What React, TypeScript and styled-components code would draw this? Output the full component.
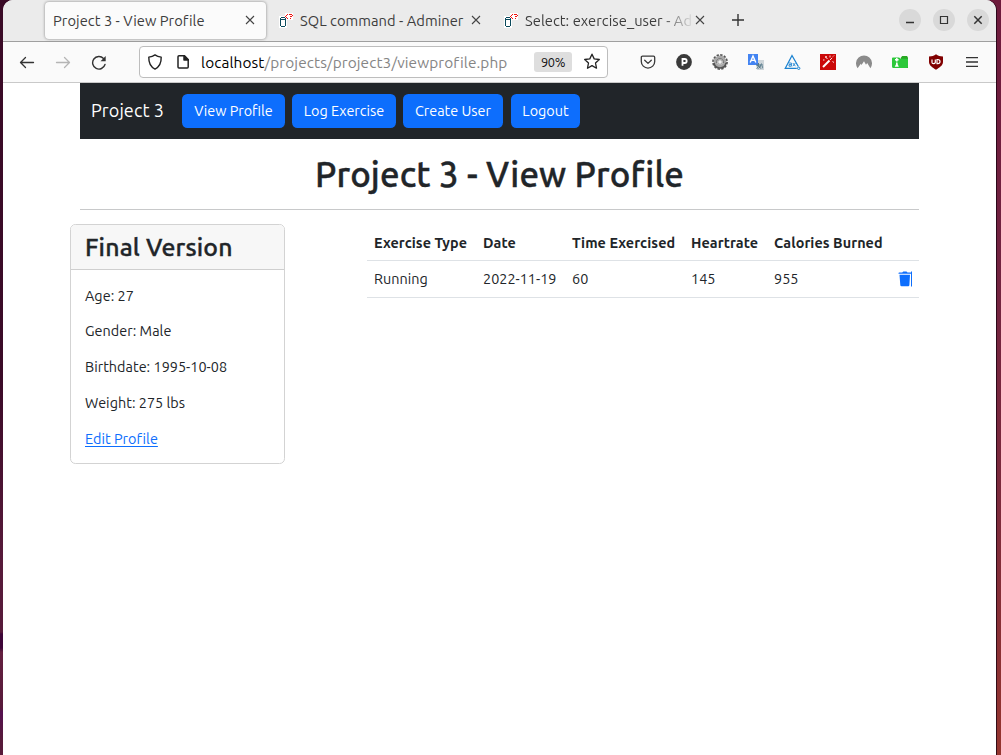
import React from "react";
import styled, { createGlobalStyle } from "styled-components";

const GlobalStyle = createGlobalStyle`
  * { box-sizing: border-box; }
  html, body { margin: 0; height: 755px; overflow: hidden; }
  body { font-family: Ubuntu, "Noto Sans", "Open Sans", sans-serif; font-size: 14.4px; color: #212529; }
`;

const Desktop = styled.div`
  height: 755px;
  padding: 0 5px 0 3px;
  background:
    linear-gradient(#3a0a26 0, #3b0a28 380px, #571a3a 560px, #571a3a 632px, #3e0638 634px, #3e0638 648px, #642040 652px, #571a3a 708px, #551050 712px, #571a3a 740px) left / 500px 100% no-repeat,
    linear-gradient(#6e1a3c 0, #712240 250px, #7c2a3c 500px, #95352f 755px);
`;

const Window = styled.div`
  display: flex;
  flex-direction: column;
  height: 755px;
  background: #fff;
  border-radius: 10px 10px 0 0;
  overflow: hidden;
  box-shadow: 1px 0 0 rgba(20, 0, 15, 0.75);
`;

const TabStrip = styled.div`
  display: flex;
  align-items: center;
  height: 42px;
  flex: none;
  padding: 0 7px 1px 42px;
  background: #ebebeb;
  border-bottom: 1px solid #9f9f9f;
`;

const Tab = styled.div<{ $active?: boolean; $width: number }>`
  display: flex;
  align-items: center;
  width: ${(p) => p.$width}px;
  height: 37px;
  padding: 0 ${(p) => (p.$active ? 11 : 10)}px 0 ${(p) => (p.$active ? 8 : 12)}px;
  border-radius: 4px;
  color: #3d3d3d;
  background: ${(p) => (p.$active ? "#fbfbfb" : "transparent")};
  box-shadow: ${(p) => (p.$active ? "0 0 3px rgba(0,0,0,.45)" : "none")};
`;

const TabTitle = styled.span<{ $fade?: boolean }>`
  flex: 1;
  min-width: 0;
  padding-top: 1px;
  white-space: nowrap;
  font-size: 14.7px;
  line-height: 22px;
  letter-spacing: 0.04px;
  ${(p) => p.$fade && "mask-image: linear-gradient(to right, #000 calc(100% - 34px), transparent);"}
`;

const NewTab = styled.div`
  display: flex;
  flex: 1;
  padding-left: 16px;
`;

const WindowButton = styled.div`
  display: flex;
  width: 22px;
  height: 22px;
  margin-left: 12px;
  border-radius: 50%;
  background: #d9d9d9;
`;

const Toolbar = styled.div`
  display: flex;
  align-items: center;
  flex: none;
  height: 41px;
  padding: 0 16px 1px;
  background: #fafafa;
  border-bottom: 1px solid #c9c9c9;
  color: #3a3a3a;
`;

const NavIcons = styled.div`
  display: flex;
  gap: 20px;
  width: 120px;
`;

const UrlBar = styled.div`
  display: flex;
  align-items: center;
  width: 469px;
  height: 32px;
  padding: 0 7px;
  border: 1px solid #bdbdbd;
  border-radius: 4px;
  background: #fff;
  color: #222;
`;

const UrlText = styled.div`
  flex: 1;
  margin-left: 11px;
  padding-top: 1px;
  white-space: nowrap;
  font-size: 15.4px;
  letter-spacing: 0.1px;
  color: #858585;
  b { font-weight: 400; color: #000; }
`;

const ZoomBadge = styled.span`
  width: 38px;
  height: 20px;
  margin-right: 11px;
  border-radius: 3px;
  background: #dedede;
  color: #111;
  font-size: 12.8px;
  line-height: 21px;
  text-align: center;
  letter-spacing: -0.4px;
`;

const Extensions = styled.div`
  display: grid;
  grid-template-columns: repeat(10, 16px);
  gap: 20px;
  margin-left: 32px;
`;

const Page = styled.main`
  width: 839px;
  margin-left: 77px;
`;

const Navbar = styled.nav`
  display: flex;
  align-items: center;
  height: 56px;
  padding-left: 11px;
  background: #212529;
`;

const Brand = styled.span`
  width: 91px;
  padding-bottom: 2px;
  color: #fff;
  font-size: 18px;
  letter-spacing: 0.1px;
  white-space: nowrap;
`;

const NavButton = styled.button<{ $width: number; $gap: number }>`
  width: ${(p) => p.$width}px;
  height: 34px;
  margin: 0 ${(p) => p.$gap}px 0 0;
  padding: 0;
  border: 0;
  border-radius: 5.4px;
  background: #0d6efd;
  color: #fff;
  font: 14.4px/34px Ubuntu, "Noto Sans", "Open Sans", sans-serif;
  white-space: nowrap;
`;

const PageTitle = styled.h1`
  height: 71px;
  margin: 0 0 14px;
  padding-top: 14px;
  border-bottom: 1px solid #c8c9ca;
  font-size: 34.8px;
  line-height: 43px;
  font-weight: 500;
  letter-spacing: 0.13px;
  -webkit-text-stroke: 0.4px #212529;
  text-align: center;
  white-space: nowrap;
`;

const Columns = styled.div`
  display: flex;
  align-items: flex-start;
  margin-left: -10px;
  gap: 82px;
`;

const Card = styled.section`
  width: 215px;
  height: 240px;
  border: 1px solid #d3d3d3;
  border-radius: 5.4px;
  overflow: hidden;
`;

const CardTitle = styled.h2`
  height: 45px;
  margin: 0;
  padding-left: 14px;
  border-bottom: 1px solid #cfcfcf;
  background: #f7f7f7;
  font-size: 24.8px;
  line-height: 44px;
  font-weight: 500;
  letter-spacing: 0.16px;
  -webkit-text-stroke: 0.35px #212529;
  white-space: nowrap;
`;

const CardBody = styled.div`
  display: flex;
  flex-direction: column;
  align-items: flex-start;
  gap: 14.1px;
  padding: 15.8px 14px;
`;

const Field = styled.span`
  line-height: 21.6px;
  letter-spacing: 0.03px;
  white-space: nowrap;
`;

const EditLink = styled(Field)`
  color: #0d6efd;
  text-decoration: underline;
  text-underline-offset: 2px;
`;

const Table = styled.div`
  width: 552px;
`;

const Row = styled.div<{ $head?: boolean }>`
  display: grid;
  grid-template-columns: 109px 89px 119px 83px 124px 1fr;
  align-items: center;
  height: 37px;
  padding: ${(p) => (p.$head ? "1px" : "0")} 0 0 7px;
  border-bottom: 1px solid #dee2e6;
  font-weight: ${(p) => (p.$head ? 700 : 400)};
  letter-spacing: ${(p) => (p.$head ? 0.06 : 0.02)}px;
`;

const Cell = styled.span`
  display: flex;
  white-space: nowrap;
`;

const Close = () => (
  <svg width="10" height="10" viewBox="0 0 10 10" stroke="#444" strokeWidth="1.1">
    <path d="M1 1l8 8M9 1l-8 8" />
  </svg>
);

const Plus = () => (
  <svg width="14" height="14" viewBox="0 0 14 14" stroke="#333" strokeWidth="1.4">
    <path d="M7 1v12M1 7h12" />
  </svg>
);

const FaviconSvg = styled.svg`
  flex: none;
  margin-right: 5px;
`;

const AdminerIcon = () => (
  <FaviconSvg width="17" height="17" viewBox="0 0 17 17" shapeRendering="crispEdges">
    <path d="M1 4h8v12H1zM7 1h8v7H7z" fill="#fff" />
    <path d="M3 5h4v1H3zM2 6h1v8H2zM7 6h1v8H7zM3 7h4v1H3zM3 14h4v1H3z" fill="#0b4a5c" />
    <path d="M9 2h1v1H9zM8 3h1v1H8zM7 4h1v1H7zM8 5h1v1H8zM9 6h1v1H9zM11 2h3v1h-3zM14 3h1v1h-1zM12 4h2v1h-2zM12 6h1v1h-1z" fill="#f01010" />
  </FaviconSvg>
);

const Arrow = ({ color = "#333", flip = false }: { color?: string; flip?: boolean }) => (
  <svg width="16" height="16" viewBox="0 0 16 16" fill="none" stroke={color} strokeWidth="1.3" strokeLinecap="round" strokeLinejoin="round">
    <path d={flip ? "M1.5 8.500h13M9.5 3.500L14.500 8.500l-5 5" : "M14.5 8.500h-13M6.5 3.500L1.500 8.500l5 5"} />
  </svg>
);

const Reload = () => (
  <svg width="16" height="16" viewBox="0 0 16 16" fill="none" stroke="#333" strokeWidth="1.4" strokeLinecap="round">
    <path d="M14 10.500A6.300 6.300 0 1 1 12.500 4.400" />
    <path d="M14.700 2v5.200H9.500z" fill="#333" stroke="none" />
  </svg>
);

const Shield = () => (
  <svg width="16" height="16" viewBox="0 0 16 16" fill="none" stroke="#222" strokeWidth="1.4" strokeLinejoin="round">
    <path d="M8 .9c2 1.5 4 2 6.200 2.200.2 5.800-1.600 9.800-6.200 12C3.400 12.900 1.600 8.900 1.800 3.100 4 2.900 6 2.400 8 .9z" />
  </svg>
);

const PageSvg = styled.svg`
  margin-left: 13px;
`;

const PageIcon = () => (
  <PageSvg width="14" height="16" viewBox="0 0 14 16" fill="none" stroke="#222" strokeWidth="1.5" strokeLinejoin="round">
    <path d="M3 1.800h5.500l3.700 3.700v7.500q0 1-1 1H3q-1 0-1-1v-10.200q0-1 1-1z" />
    <path d="M8 1.800v4.200h4.200z" fill="#222" />
  </PageSvg>
);

const Star = () => (
  <svg width="17" height="17" viewBox="0 0 17 17" fill="none" stroke="#222" strokeWidth="1.3" strokeLinejoin="round">
    <path d="M9 1.200l2.200 4.700 5.100.6-3.800 3.500 1 5.200-4.500-2.600L4.500 15.200l1-5.200L1.700 6.500l5.100-.6z" />
  </svg>
);

const Pocket = () => (
  <svg width="16" height="16" viewBox="0 0 16 16" fill="none" stroke="#3a3a3a" strokeWidth="1.3" strokeLinecap="round" strokeLinejoin="round">
    <path d="M2.500 2.200h11q1.200 0 1.200 1.200v4a6.700 6.700 0 0 1-13.400 0v-4q0-1.200 1.200-1.200z" />
    <path d="M4.700 6.200L8 9.400l3.300-3.200" />
  </svg>
);

const BadgeP = () => (
  <svg width="16" height="16" viewBox="0 0 16 16">
    <circle cx="8" cy="8" r="7.900" fill="#3a3a3a" />
    <path d="M6.500 11.700V5H8.700a1.900 1.900 0 0 1 0 4H6.500" fill="none" stroke="#fff" strokeWidth="1.800" />
  </svg>
);

const Gear = () => (
  <svg width="16" height="16" viewBox="0 0 16 16" fill="none">
    <circle cx="8" cy="8" r="6.900" stroke="#555" strokeWidth="2" strokeDasharray="2.300 1.313" />
    <circle cx="8" cy="8" r="4.600" stroke="#a8a8a8" strokeWidth="3.600" />
    <path d="M2 9a6.100 6.100 0 0 0 12 0" stroke="#555" strokeWidth="1.500" />
    <path d="M4.500 9a3.600 3.600 0 1 1 7 0" stroke="#777" />
    <circle cx="8" cy="8" r="2.300" fill="#f2f2f2" stroke="#8a8a8a" strokeWidth=".8" />
  </svg>
);

const Translate = () => (
  <svg width="16" height="16" viewBox="0 0 16 16" fill="none">
    <path d="M7 6h9v10H9z" fill="#cfd6da" />
    <path d="M0 0h10v11H0z" fill="#4384f2" />
    <path d="M2.200 8.500L5 2l2.800 6.500M3.300 6.400h3.400" stroke="#fff" strokeWidth="1.400" />
    <path d="M8 11h7M10.500 9v2.500q0 2.500-2 3M9 11.500q3 0 3.500 3M13.500 9.500q-1 4-3 5M14 12q1 1 0 2.500" stroke="#55798a" strokeWidth="1" />
  </svg>
);

const Axe = () => (
  <svg width="17" height="16" viewBox="0 0 17 16" fill="none" stroke="#1c83d1" strokeWidth="1.300">
    <path d="M12.800 14.300H1.300L8 1.500l6.300 11" />
    <circle cx="14.700" cy="14.300" r="1.200" strokeWidth="1" />
    <path d="M4.800 9h2.600v3.200H5v-1.600h2.400M8.800 9l2.600 3.200M11.400 9l-2.600 3.200" strokeWidth=".9" />
  </svg>
);

const Wand = () => (
  <svg width="16" height="16" viewBox="0 0 16 16" fill="none">
    <path d="M0 0h16v16H0z" fill="#cb0909" />
    <path d="M3 13l6.500-6.500" stroke="#fff" strokeWidth="2" />
    <path d="M10 6l2.200-2.200M6 2v2M5 3h2M10 1.500v2M13 2.500l1-1M12.500 7.500l1.500 1M3 6h1.500M7.500 5l-1-1" stroke="#ffe2e2" strokeWidth="1" />
  </svg>
);

const Vpn = () => (
  <svg width="16" height="16" viewBox="0 0 16 16">
    <path d="M1.600 14.200A8 8 0 1 1 14.400 14.200L11.200 9l-1.200 1.800L8 7.300 5.500 11 4.800 9.700z" fill="#8b8b8b" />
  </svg>
);

const Folder = () => (
  <svg width="16" height="16" viewBox="0 0 16 16" fill="none">
    <path d="M9 3.500l1.200-1.500h4.800l1 1.500V14H9z" fill="#28a823" />
    <path d="M0 4.500Q0 3.500 1 3.500h6l2 1.200h7v8.300l-1 1H1.500q-1.500 0-1.500-1.500z" fill="#2cc83a" />
    <path d="M4.800 4v3.600M3 5.800h3.600M4.800 8.500v2" stroke="#fff" strokeWidth="1.500" />
    <path d="M4.800 8.800l2.100 4H2.700z" fill="#fff" />
  </svg>
);

const Ublock = () => (
  <svg width="16" height="16" viewBox="0 0 16 16" fill="none">
    <path d="M8 .3c2 1.500 4 2.200 7 2.200V8c0 3.500-3.500 5.500-7 7.700C4.500 13.500 1 11.500 1 8V2.500C4 2.500 6 1.800 8 .3z" fill="#800000" />
    <path d="M4 5.500v3q0 1.200 1.500 1.200T7.300 8.500v-3M9 5.500h.8q2.200 0 2.200 2.100T9.800 9.700H9z" stroke="#fff" strokeWidth="1.200" />
  </svg>
);

const Menu = () => (
  <svg width="16" height="16" viewBox="0 0 16 16" stroke="#333" strokeWidth="1.300">
    <path d="M2 3.600h12M2 8h12M2 12.400h12" />
  </svg>
);

const WindowGlyph = ({ d, width = 1.5 }: { d: string; width?: number }) => (
  <svg width="22" height="22" viewBox="0 0 22 22" fill="none" stroke="#333" strokeWidth={width}>
    <path d={d} />
  </svg>
);

const Trash = () => (
  <svg width="15" height="16" viewBox="0 0 15 16" fill="#0d6efd">
    <path d="M.5 2.300q0-.8.800-.8h2.900L5.300.6h3.200l1 .9H13v1.300H.5zM1.500 3.800h10.500l-.6 10.200q-.1 1.200-1.200 1.200H3.500q-1.100 0-1.200-1.200zM13 .5h1v15h-1z" />
  </svg>
);

export default function App() {
  return (
    <Desktop>
      <GlobalStyle />
      <Window>
        <TabStrip>
          <Tab $active $width={221}>
            <TabTitle>Project 3 - View Profile</TabTitle>
            <Close />
          </Tab>
          <Tab $width={225}>
            <AdminerIcon />
            <TabTitle>SQL command - Adminer</TabTitle>
            <Close />
          </Tab>
          <Tab $width={224}>
            <AdminerIcon />
            <TabTitle $fade>Select: exercise_user - Ad</TabTitle>
            <Close />
          </Tab>
          <NewTab><Plus /></NewTab>
          <WindowButton><WindowGlyph d="M7 13.500h8" /></WindowButton>
          <WindowButton><WindowGlyph d="M7.500 7.500h7v7h-7z" width={1.2} /></WindowButton>
          <WindowButton><WindowGlyph d="M7.300 7.300l7.400 7.400M14.700 7.300l-7.400 7.400" /></WindowButton>
        </TabStrip>
        <Toolbar>
          <NavIcons><Arrow /><Arrow flip color="#b5b5b5" /><Reload /></NavIcons>
          <UrlBar>
            <Shield />
            <PageIcon />
            <UrlText><b>localhost</b>/projects/project3/viewprofile.php</UrlText>
            <ZoomBadge>90%</ZoomBadge>
            <Star />
          </UrlBar>
          <Extensions>
            <Pocket /><BadgeP /><Gear /><Translate /><Axe /><Wand /><Vpn /><Folder /><Ublock /><Menu />
          </Extensions>
        </Toolbar>
        <Page>
          <Navbar>
            <Brand>Project 3</Brand>
            <NavButton $width={103} $gap={7}>View Profile</NavButton>
            <NavButton $width={104} $gap={7}>Log Exercise</NavButton>
            <NavButton $width={100} $gap={8}>Create User</NavButton>
            <NavButton $width={69} $gap={0}>Logout</NavButton>
          </Navbar>
          <PageTitle>Project 3 - View Profile</PageTitle>
          <Columns>
            <Card>
              <CardTitle>Final Version</CardTitle>
              <CardBody>
                <Field>Age: 27</Field>
                <Field>Gender: Male</Field>
                <Field>Birthdate: 1995-10-08</Field>
                <Field>Weight: 275 lbs</Field>
                <EditLink>Edit Profile</EditLink>
              </CardBody>
            </Card>
            <Table>
              <Row $head>
                <Cell>Exercise Type</Cell>
                <Cell>Date</Cell>
                <Cell>Time Exercised</Cell>
                <Cell>Heartrate</Cell>
                <Cell>Calories Burned</Cell>
              </Row>
              <Row>
                <Cell>Running</Cell>
                <Cell>2022-11-19</Cell>
                <Cell>60</Cell>
                <Cell>145</Cell>
                <Cell>955</Cell>
                <Cell><Trash /></Cell>
              </Row>
            </Table>
          </Columns>
        </Page>
      </Window>
    </Desktop>
  );
}
